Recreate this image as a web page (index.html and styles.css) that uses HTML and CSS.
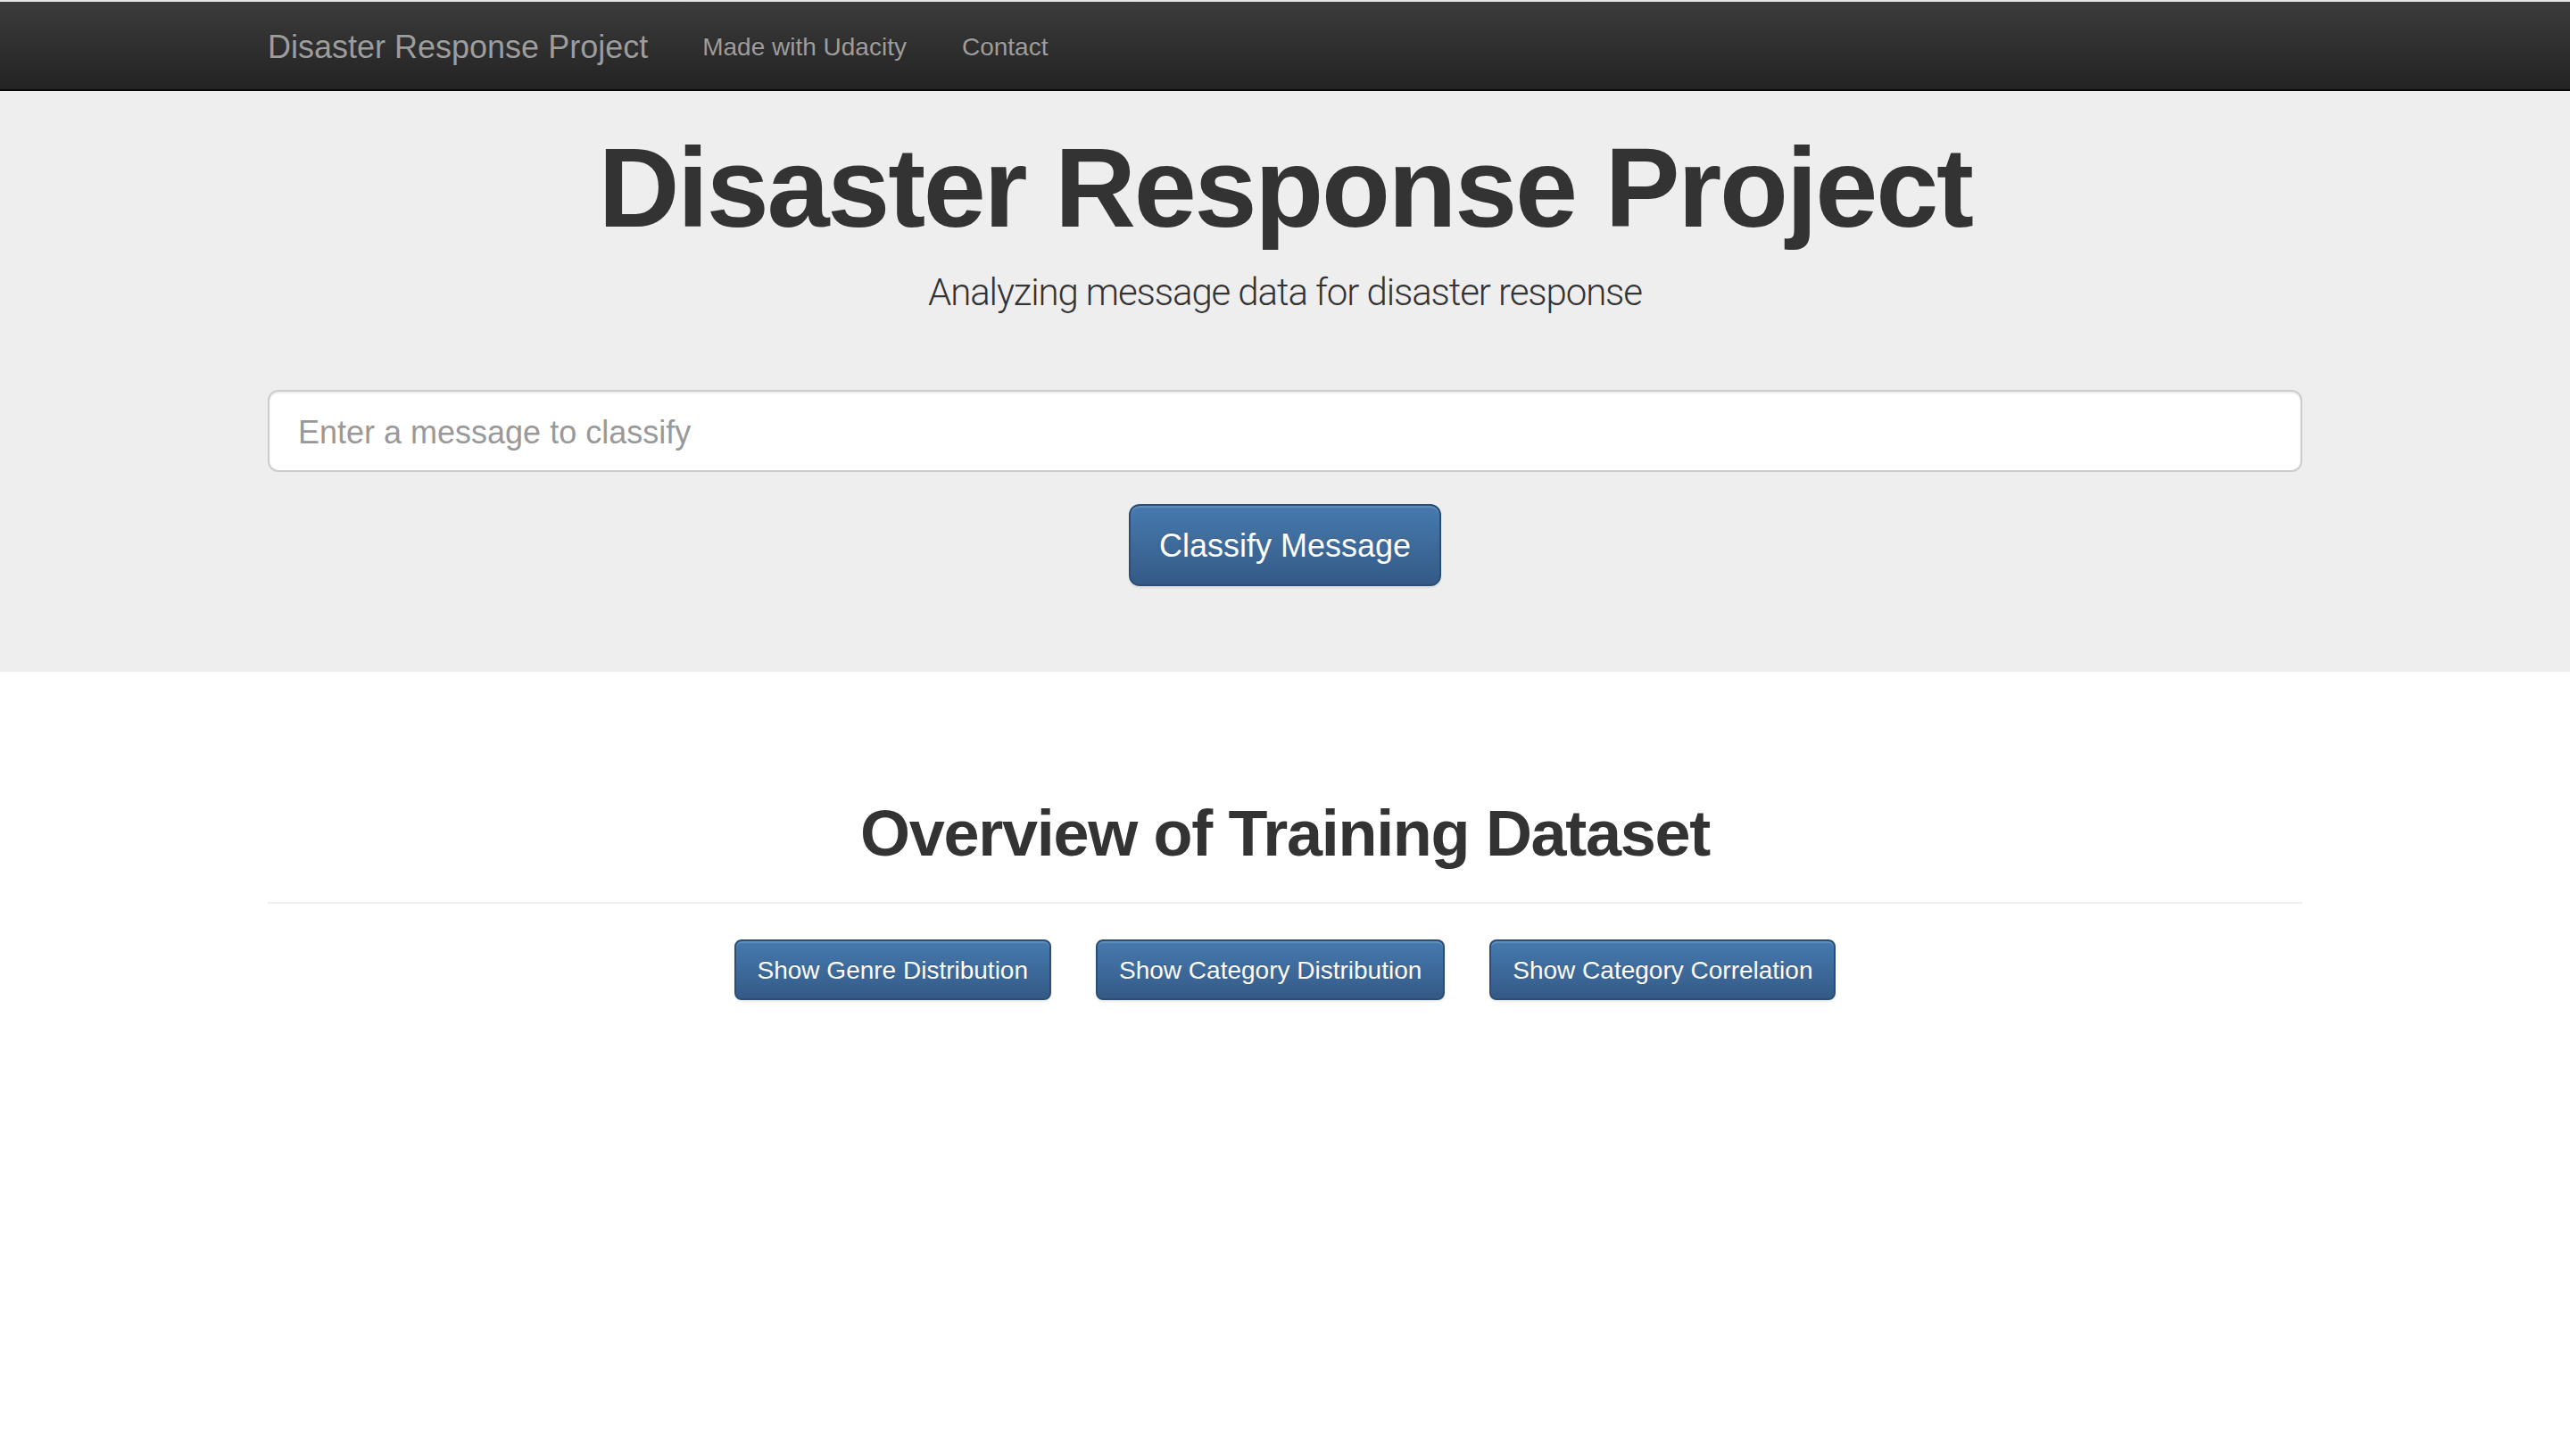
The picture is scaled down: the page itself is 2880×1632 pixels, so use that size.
FILE: index.html
```html
<!DOCTYPE html>
<html lang="en">
<head>
<meta charset="utf-8">
<title>Disaster Response Project</title>
<link rel="stylesheet" href="styles.css">
</head>
<body>
<div class="topline"></div>
<nav class="navbar">
  <div class="container nav-inner">
    <a class="brand" href="#">Disaster Response Project</a>
    <ul class="nav">
      <li><a href="#">Made with Udacity</a></li>
      <li><a href="#">Contact</a></li>
    </ul>
  </div>
</nav>
<div class="jumbotron">
  <div class="container jumbo-inner">
    <h1 class="jumbo-title">Disaster Response Project</h1>
    <p class="lead">Analyzing message data for disaster response</p>
    <form class="classify-form">
      <input class="form-control" type="text" name="query" placeholder="Enter a message to classify">
      <button class="btn btn-lg" type="button">Classify Message</button>
    </form>
  </div>
</div>
<div class="container main">
  <h1 class="section-title">Overview of Training Dataset</h1>
  <hr class="divider">
  <div class="btn-row">
    <button class="btn" type="button">Show Genre Distribution</button>
    <button class="btn" type="button">Show Category Distribution</button>
    <button class="btn" type="button">Show Category Correlation</button>
  </div>
</div>
</body>
</html>
```
FILE: styles.css
```css
* { box-sizing: border-box; }

html, body {
  margin: 0;
  padding: 0;
}

body {
  background: #ffffff;
  color: #333333;
  font-family: "Liberation Sans", Arial, sans-serif;
  font-size: 28px;
  min-height: 1632px;
}

.topline {
  height: 2px;
  background: #e4e4e4;
}

.container {
  width: 2340px;
  margin: 0 auto;
  padding: 0 30px;
}

/* Navbar */
.navbar {
  height: 100px;
  background: linear-gradient(to bottom, #3b3b3b 0%, #232323 100%);
  border-bottom: 2px solid #080808;
}

.nav-inner {
  height: 98px;
  padding-top: 3px;
  display: flex;
  align-items: center;
}

.brand {
  font-size: 36px;
  line-height: 40px;
  color: #9d9d9d;
  text-decoration: none;
  padding-right: 30px;
  text-shadow: 0 -1px 0 rgba(0, 0, 0, 0.25);
}

.nav {
  display: flex;
  list-style: none;
  margin: 0;
  padding: 0;
}

.nav a {
  display: block;
  padding: 0 31px;
  font-size: 28px;
  line-height: 40px;
  color: #9d9d9d;
  text-decoration: none;
  text-shadow: 0 -1px 0 rgba(0, 0, 0, 0.25);
}

/* Jumbotron */
.jumbotron {
  background: #eeeeee;
  padding: 40px 0 96px;
}

.jumbo-inner {
  display: flex;
  flex-direction: column;
  align-items: center;
}

.jumbo-title {
  margin: 0;
  font-size: 126px;
  font-weight: 700;
  line-height: 1.1;
  letter-spacing: -2.3px;
  color: #333333;
  text-align: center;
}

.lead {
  margin: 18px 0 0;
  font-family: Roboto, "Liberation Sans", sans-serif;
  font-weight: 300;
  font-size: 42px;
  line-height: 1.4;
  letter-spacing: -1.1px;
  color: #333333;
  text-align: center;
}

.classify-form {
  width: 100%;
  margin-top: 80px;
  display: flex;
  flex-direction: column;
  align-items: center;
}

.form-control {
  width: 100%;
  height: 92px;
  padding: 22px 32px 18px;
  font-family: "Liberation Sans", Arial, sans-serif;
  font-size: 36px;
  color: #555555;
  background: #ffffff;
  border: 2px solid #cccccc;
  border-radius: 12px;
  box-shadow: inset 0 2px 2px rgba(0, 0, 0, 0.075);
  outline: none;
}

.form-control::placeholder {
  color: #999999;
}

.btn {
  display: inline-block;
  margin: 0;
  padding: 13px 24px 11px;
  font-family: "Liberation Sans", Arial, sans-serif;
  font-size: 28px;
  line-height: 40px;
  color: #ffffff;
  text-shadow: 0 -1px 0 rgba(0, 0, 0, 0.2);
  background: linear-gradient(to bottom, #467aaf 0%, #345a86 100%);
  border: 2px solid #2b4e78;
  border-radius: 8px;
  box-shadow: inset 0 2px 0 rgba(255, 255, 255, 0.15), 0 2px 2px rgba(0, 0, 0, 0.075);
  white-space: nowrap;
  cursor: pointer;
}

.btn-lg {
  margin-top: 36px;
  padding: 21px 32px 19px;
  font-size: 36px;
  line-height: 48px;
  border-radius: 12px;
}

/* Main */
.main {
  padding-top: 142px;
}

.section-title {
  margin: 0;
  font-size: 72px;
  font-weight: 700;
  line-height: 1.1;
  letter-spacing: -1.3px;
  text-align: center;
  color: #333333;
}

.divider {
  margin: 36px 0 0;
  border: 0;
  border-top: 2px solid #eeeeee;
  height: 0;
}

.btn-row {
  margin-top: 40px;
  display: flex;
  justify-content: center;
  gap: 50px;
}
```
